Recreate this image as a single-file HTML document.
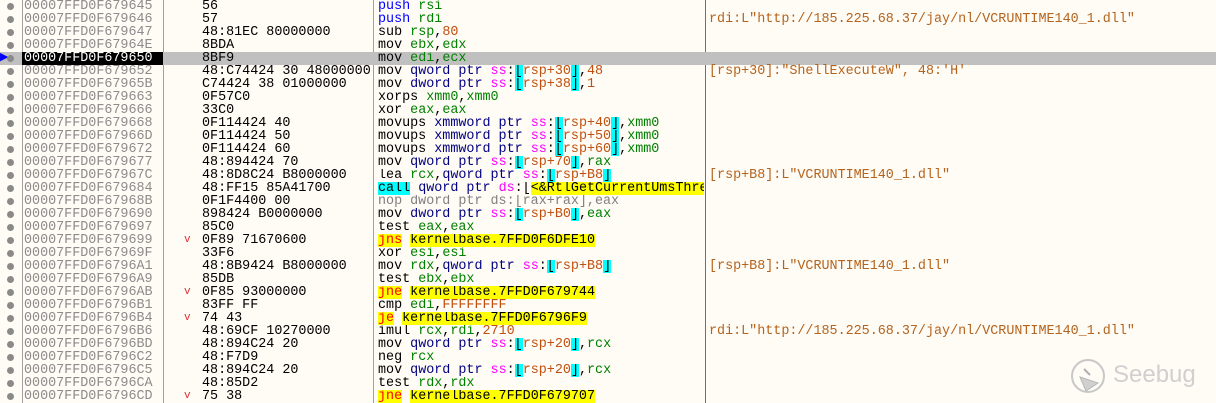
<!DOCTYPE html>
<html><head><meta charset="utf-8"><style>
html,body{margin:0;padding:0;width:1216px;height:403px;overflow:hidden;background:#fffbf5;}
body{font-family:"Liberation Mono",monospace;font-size:13.4px;position:relative;}
.r{position:absolute;left:0;width:1216px;height:13px;line-height:13px;white-space:pre;}
.dot{position:absolute;left:7px;top:3px;width:7px;height:7px;border-radius:50%;background:#8a8a8a;}
.a{position:absolute;left:24px;color:#8c8c8c;}
.b{position:absolute;left:202px;width:170px;overflow:hidden;color:#000;}
.j{position:absolute;left:184px;color:#e03030;font-size:11px;}
.d{position:absolute;left:378px;width:326px;overflow:hidden;color:#000;}
.c{position:absolute;left:709px;color:#b4641e;}
.sel{background:#c0c0c0;}
.sel .a{background:#000;color:#fff;left:22px;width:141px;padding-left:2px;box-sizing:border-box;}
.vl{position:absolute;top:0;height:403px;width:1px;background:#a0a0a0;}
.p{color:#0000ff}.g{color:#008000}.n{color:#000080}.m{color:#ff00ff}.k{background:#00ffff}.o{color:#c05010}.y{background:#ffff00}.rd{color:#ff0000;background:#ffff00}.gr{color:#808080}
</style></head><body>
<div class="vl" style="left:22px"></div>
<div class="vl" style="left:163px"></div>
<div class="vl" style="left:373px"></div>
<div class="vl" style="left:705px;background:#707070"></div>

<div class="r" style="top:0"><i class="dot"></i><span class="a">00007FFD0F679645</span><span class="b">56</span><span class="d"><span class="p">push</span> <span class="g">rsi</span></span></div>
<div class="r" style="top:13px"><i class="dot"></i><span class="a">00007FFD0F679646</span><span class="b">57</span><span class="d"><span class="p">push</span> <span class="g">rdi</span></span><span class="c">rdi:L"http://185.225.68.37/jay/nl/VCRUNTIME140_1.dll"</span></div>
<div class="r" style="top:26px"><i class="dot"></i><span class="a">00007FFD0F679647</span><span class="b">48:81EC 80000000</span><span class="d">sub <span class="g">rsp</span>,<span class="o">80</span></span></div>
<div class="r" style="top:39px"><i class="dot"></i><span class="a">00007FFD0F67964E</span><span class="b">8BDA</span><span class="d">mov <span class="g">ebx</span>,<span class="g">edx</span></span></div>
<div class="r sel" style="top:52px"><span style="position:absolute;left:0;color:#0000ff;font-size:11px">&#9654;</span><i class="dot"></i><span class="a">00007FFD0F679650</span><span class="b">8BF9</span><span class="d">mov <span class="g">edi</span>,<span class="g">ecx</span></span></div>
<div class="r" style="top:65px"><i class="dot"></i><span class="a">00007FFD0F679652</span><span class="b">48:C74424 30 48000000</span><span class="d">mov <span class="n">qword ptr</span> <span class="m">ss</span>:<span class="k">[</span><span class="o">rsp+30</span><span class="k">]</span>,<span class="o">48</span></span><span class="c">[rsp+30]:"ShellExecuteW", 48:'H'</span></div>
<div class="r" style="top:78px"><i class="dot"></i><span class="a">00007FFD0F67965B</span><span class="b">C74424 38 01000000</span><span class="d">mov <span class="n">dword ptr</span> <span class="m">ss</span>:<span class="k">[</span><span class="o">rsp+38</span><span class="k">]</span>,<span class="o">1</span></span></div>
<div class="r" style="top:91px"><i class="dot"></i><span class="a">00007FFD0F679663</span><span class="b">0F57C0</span><span class="d">xorps <span class="g">xmm0</span>,<span class="g">xmm0</span></span></div>
<div class="r" style="top:104px"><i class="dot"></i><span class="a">00007FFD0F679666</span><span class="b">33C0</span><span class="d">xor <span class="g">eax</span>,<span class="g">eax</span></span></div>
<div class="r" style="top:117px"><i class="dot"></i><span class="a">00007FFD0F679668</span><span class="b">0F114424 40</span><span class="d">movups <span class="n">xmmword ptr</span> <span class="m">ss</span>:<span class="k">[</span><span class="o">rsp+40</span><span class="k">]</span>,<span class="g">xmm0</span></span></div>
<div class="r" style="top:130px"><i class="dot"></i><span class="a">00007FFD0F67966D</span><span class="b">0F114424 50</span><span class="d">movups <span class="n">xmmword ptr</span> <span class="m">ss</span>:<span class="k">[</span><span class="o">rsp+50</span><span class="k">]</span>,<span class="g">xmm0</span></span></div>
<div class="r" style="top:143px"><i class="dot"></i><span class="a">00007FFD0F679672</span><span class="b">0F114424 60</span><span class="d">movups <span class="n">xmmword ptr</span> <span class="m">ss</span>:<span class="k">[</span><span class="o">rsp+60</span><span class="k">]</span>,<span class="g">xmm0</span></span></div>
<div class="r" style="top:156px"><i class="dot"></i><span class="a">00007FFD0F679677</span><span class="b">48:894424 70</span><span class="d">mov <span class="n">qword ptr</span> <span class="m">ss</span>:<span class="k">[</span><span class="o">rsp+70</span><span class="k">]</span>,<span class="g">rax</span></span></div>
<div class="r" style="top:169px"><i class="dot"></i><span class="a">00007FFD0F67967C</span><span class="b">48:8D8C24 B8000000</span><span class="d">lea <span class="g">rcx</span>,<span class="n">qword ptr</span> <span class="m">ss</span>:<span class="k">[</span><span class="o">rsp+B8</span><span class="k">]</span></span><span class="c">[rsp+B8]:L"VCRUNTIME140_1.dll"</span></div>
<div class="r" style="top:182px"><i class="dot"></i><span class="a">00007FFD0F679684</span><span class="b">48:FF15 85A41700</span><span class="d"><span class="k">call</span> <span class="n">qword ptr</span> <span class="m">ds</span>:[<span class="y">&lt;&amp;RtlGetCurrentUmsThread&gt;]</span></span></div>
<div class="r" style="top:195px"><i class="dot"></i><span class="a">00007FFD0F67968B</span><span class="b">0F1F4400 00</span><span class="d gr">nop dword ptr ds:[rax+rax],eax</span></div>
<div class="r" style="top:208px"><i class="dot"></i><span class="a">00007FFD0F679690</span><span class="b">898424 B0000000</span><span class="d">mov <span class="n">dword ptr</span> <span class="m">ss</span>:<span class="k">[</span><span class="o">rsp+B0</span><span class="k">]</span>,<span class="g">eax</span></span></div>
<div class="r" style="top:221px"><i class="dot"></i><span class="a">00007FFD0F679697</span><span class="b">85C0</span><span class="d">test <span class="g">eax</span>,<span class="g">eax</span></span></div>
<div class="r" style="top:234px"><i class="dot"></i><span class="a">00007FFD0F679699</span><span class="j">v</span><span class="b">0F89 71670600</span><span class="d"><span class="rd">jns</span> <span class="y">kernelbase.7FFD0F6DFE10</span></span></div>
<div class="r" style="top:247px"><i class="dot"></i><span class="a">00007FFD0F67969F</span><span class="b">33F6</span><span class="d">xor <span class="g">esi</span>,<span class="g">esi</span></span></div>
<div class="r" style="top:260px"><i class="dot"></i><span class="a">00007FFD0F6796A1</span><span class="b">48:8B9424 B8000000</span><span class="d">mov <span class="g">rdx</span>,<span class="n">qword ptr</span> <span class="m">ss</span>:<span class="k">[</span><span class="o">rsp+B8</span><span class="k">]</span></span><span class="c">[rsp+B8]:L"VCRUNTIME140_1.dll"</span></div>
<div class="r" style="top:273px"><i class="dot"></i><span class="a">00007FFD0F6796A9</span><span class="b">85DB</span><span class="d">test <span class="g">ebx</span>,<span class="g">ebx</span></span></div>
<div class="r" style="top:286px"><i class="dot"></i><span class="a">00007FFD0F6796AB</span><span class="j">v</span><span class="b">0F85 93000000</span><span class="d"><span class="rd">jne</span> <span class="y">kernelbase.7FFD0F679744</span></span></div>
<div class="r" style="top:299px"><i class="dot"></i><span class="a">00007FFD0F6796B1</span><span class="b">83FF FF</span><span class="d">cmp <span class="g">edi</span>,<span class="o">FFFFFFFF</span></span></div>
<div class="r" style="top:312px"><i class="dot"></i><span class="a">00007FFD0F6796B4</span><span class="j">v</span><span class="b">74 43</span><span class="d"><span class="rd">je</span> <span class="y">kernelbase.7FFD0F6796F9</span></span></div>
<div class="r" style="top:325px"><i class="dot"></i><span class="a">00007FFD0F6796B6</span><span class="b">48:69CF 10270000</span><span class="d">imul <span class="g">rcx</span>,<span class="g">rdi</span>,<span class="o">2710</span></span><span class="c">rdi:L"http://185.225.68.37/jay/nl/VCRUNTIME140_1.dll"</span></div>
<div class="r" style="top:338px"><i class="dot"></i><span class="a">00007FFD0F6796BD</span><span class="b">48:894C24 20</span><span class="d">mov <span class="n">qword ptr</span> <span class="m">ss</span>:<span class="k">[</span><span class="o">rsp+20</span><span class="k">]</span>,<span class="g">rcx</span></span></div>
<div class="r" style="top:351px"><i class="dot"></i><span class="a">00007FFD0F6796C2</span><span class="b">48:F7D9</span><span class="d">neg <span class="g">rcx</span></span></div>
<div class="r" style="top:364px"><i class="dot"></i><span class="a">00007FFD0F6796C5</span><span class="b">48:894C24 20</span><span class="d">mov <span class="n">qword ptr</span> <span class="m">ss</span>:<span class="k">[</span><span class="o">rsp+20</span><span class="k">]</span>,<span class="g">rcx</span></span></div>
<div class="r" style="top:377px"><i class="dot"></i><span class="a">00007FFD0F6796CA</span><span class="b">48:85D2</span><span class="d">test <span class="g">rdx</span>,<span class="g">rdx</span></span></div>
<div class="r" style="top:390px"><i class="dot"></i><span class="a">00007FFD0F6796CD</span><span class="j">v</span><span class="b">75 38</span><span class="d"><span class="rd">jne</span> <span class="y">kernelbase.7FFD0F679707</span></span></div>

<svg style="position:absolute;left:1068px;top:355px" width="40" height="42" viewBox="0 0 40 42"><circle cx="20" cy="21" r="16" fill="none" stroke="#c8c8c8" stroke-width="2"/><path d="M12 22 L18 36 L30 28 Z" fill="#d0d0d0" stroke="#b8b8b8"/><path d="M16 14 L22 20" stroke="#b0b0b0" stroke-width="2"/></svg>
<div style="position:absolute;left:1113px;top:361px;font-family:'Liberation Sans',sans-serif;font-size:24px;color:#d0d0d0;">Seebug</div>
</body></html>
